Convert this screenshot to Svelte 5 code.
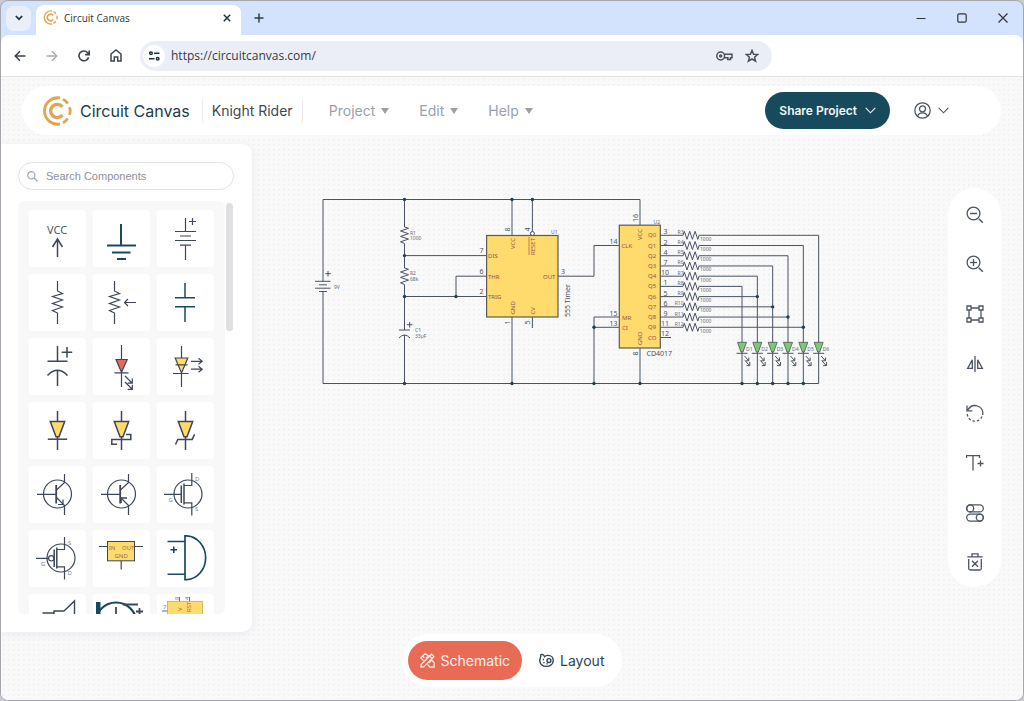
<script lang="ts">
  let search = $state('');
  let url = $state('https://circuitcanvas.com/');
  let projectName = $state('Knight Rider');
  let mode = $state<'schematic' | 'layout'>('schematic');

  const menus = ['Project', 'Edit', 'Help'];

  const parts = [
    'VCC', 'Ground', 'Battery',
    'Resistor', 'Potentiometer', 'Capacitor',
    'Polarized capacitor', 'LED', 'Laser diode',
    'Diode', 'Schottky diode', 'Zener diode',
    'NPN transistor', 'PNP transistor', 'N-channel MOSFET',
    'P-channel MOSFET', 'Voltage regulator', 'AND gate',
    'Speaker', 'Motor', '555 timer'
  ];

  const tools = [
    'Zoom out', 'Zoom in', 'Zoom to fit', 'Flip',
    'Rotate', 'Add text', 'Toggle options', 'Delete'
  ];

  // CD4017 outputs, one row per pin
  const firstRow = 235.3;
  const rowStep = 10.22;
  const ledStep = 15.33;
  const outputs = [
    { pin: '3', led: 5 },
    { pin: '2', led: 4 },
    { pin: '4', led: 3 },
    { pin: '7', led: 2 },
    { pin: '10', led: 1 },
    { pin: '1', led: 0 },
    { pin: '5', led: 1 },
    { pin: '6', led: 2 },
    { pin: '9', led: 3 },
    { pin: '11', led: 4 }
  ].map((o, i) => ({
    ...o,
    name: `Q${i}`,
    resistor: `R${i + 3}`,
    y: firstRow + i * rowStep,
    x: 742 + o.led * ledStep,
    joins: i > 5
  }));

  const leds = [0, 1, 2, 3, 4, 5].map((i) => ({
    x: 742 + i * ledStep,
    top: firstRow + (5 - i) * rowStep
  }));

  const nodes = [
    [404.5, 199.5], [512, 199.5], [532.4, 199.5],
    [404.5, 255.6], [404.5, 296.5], [456, 296.5],
    [404.5, 383.5], [512, 383.5], [594, 383.5], [640, 383.5], [594, 327.3]
  ];

  const labels = [
    { t: 'DIS', x: 488, y: 258 },
    { t: 'THR', x: 488, y: 278.5 },
    { t: 'TRIG', x: 488, y: 299 },
    { t: 'OUT', x: 543, y: 278.5 },
    { t: 'CLK', x: 621.5, y: 248 },
    { t: 'MR', x: 622, y: 319.5 },
    { t: 'CI', x: 622, y: 330 },
    { t: 'CO', x: 648, y: 340 }
  ];

  const turned = [
    { t: 'VCC', x: 514.5, y: 249 },
    { t: 'RESET', x: 534.8, y: 255 },
    { t: 'GND', x: 514.5, y: 314.5 },
    { t: 'CV', x: 534.8, y: 314.5 },
    { t: 'VCC', x: 642.3, y: 240 },
    { t: 'GND', x: 642.3, y: 345 }
  ];

  const pins = [
    { t: '7', x: 479.5, y: 252.5 },
    { t: '6', x: 479.5, y: 273.5 },
    { t: '2', x: 479.5, y: 294 },
    { t: '3', x: 561, y: 274 },
    { t: '14', x: 609.5, y: 243.7 },
    { t: '15', x: 609.5, y: 315.5 },
    { t: '13', x: 609.5, y: 326 },
    { t: '12', x: 661, y: 336.3 }
  ];

  const turnedPins = [
    { t: '8', x: 509.7, y: 231.5 },
    { t: '4', x: 530, y: 231.5 },
    { t: '1', x: 509.7, y: 324.5 },
    { t: '5', x: 530, y: 324.5 },
    { t: '16', x: 638.3, y: 222 },
    { t: '8', x: 638.3, y: 355.5 }
  ];
</script>

{#snippet logo(size: number)}
  <svg width={size} height={size} viewBox="0 0 30 30" fill="none" stroke="#dea653" stroke-width="2.8">
    <path d="M18 2A13.2 13.2 0 1 0 18 28" />
    <path d="M21 3.3A13.2 13.2 0 0 1 25.8 7.5M27.6 11.2A13.2 13.2 0 0 1 27.6 18.8M25.8 22.5A13.2 13.2 0 0 1 21 26.7" />
    <path d="M20.3 10.8A6.6 6.6 0 1 0 20.3 19.2" stroke-width="3.4" />
  </svg>
{/snippet}

{#snippet chevron()}
  <svg width="11" height="7" viewBox="0 0 11 7" fill="none" stroke="currentColor" stroke-width="1.1">
    <path d="M.7 .8L5.5 5.8L10.3 .8" />
  </svg>
{/snippet}

{#snippet partIcon(i: number)}
  <svg class="part-icon" viewBox="0 0 57 57" fill="none" stroke="#3d4757" stroke-width="1.2">
    {#if i === 0}
      <text x="28" y="24" font-size="11" text-anchor="middle">VCC</text>
      <path d="M28.5 47V29.5M23.5 37L28.5 29L33.5 37" stroke-width="1.5" />
    {:else if i === 1}
      <g stroke="#194a5c" stroke-width="2"><path d="M28 14V35M14 35.5H43M19 42.5H37.5M24 49H33" /></g>
    {:else if i === 2}
      <path d="M28.5 8V21.5M18 21.5H39M23 26H34M18 30.5H39M23 35.2H34M28.5 35V50M35.5 8V15M32 11.5H39" />
    {:else if i === 3}
      <path d="M28.5 7V17L33.5 19.5L23.5 22.5L33.5 26L23.5 29.5L33.5 33L23.5 36.5L28.5 39V50" />
    {:else if i === 4}
      <path d="M21.5 7V17L26.5 19.5L16.5 22.5L26.5 26L16.5 29.5L26.5 33L16.5 36.5L21.5 39V50M43 28.5H31.5M35 25L31.5 28.5L35 32" />
    {:else if i === 5}
      <path d="M28 9V23.5M18 23.7H38M18 32.7H38M28 33V48" stroke="#194a5c" stroke-width="1.5" />
    {:else if i === 6}
      <path d="M28.5 8V23.3M18.5 23.3H38.5M18.5 37.5Q28.5 27 38.5 37.5M28.5 32.5V48M38 9V19.5M32.7 14.2H43.2" stroke-width="1.5" />
    {:else if i === 7}
      <path d="M28.5 7V21M28.5 35V49" />
      <path d="M23 21.5H34.2L28.5 34.2Z" fill="#e96a54" />
      <path d="M21.5 34.8H35.5M32 38L39 45M39.3 40.5V45.2H34.6M32 44L39 51M39.3 46.8V51.3H34.6" />
    {:else if i === 8}
      <path d="M24.5 8V20M24.5 35V49" />
      <path d="M18.2 20H30.8L24.5 35Z" fill="#ffdb6e" />
      <path d="M16 35.5H31.5M18.5 26.8H30.5M34 23.3H45M41.5 20.3L45.2 23.3L41.5 26.3M34 31.2H45M41.5 28.2L45.2 31.2L41.5 34.2" />
    {:else if i < 12}
      <path d="M28.5 9V19M28.5 35V48" stroke-width="1.5" />
      <path d="M21.3 19.6H35.7L30 34.8H27Z" fill="#ffdb6e" stroke-width="1.5" />
      {#if i === 9}
        <path d="M18.8 37.2H38.2" stroke-width="1.5" />
      {:else if i === 10}
        <path d="M24 42.3H18.8V37.4H37.8V32.6H33" stroke-width="1.5" />
      {:else}
        <path d="M18.5 42.5L20.8 37.4H35.2L37.6 32.4" stroke-width="1.5" />
      {/if}
    {:else if i < 14}
      <circle cx="28.5" cy="28" r="14" />
      <path d="M8 28.3H27M35.5 8V16.5L27.5 24M27.5 31.5L35.5 39.5V49" />
      <path d="M27.2 19V37.5" stroke-width="1.8" />
      {#if i === 12}
        <path d="M34 33.5V38.5H29" />
      {:else}
        <path d="M28 37V32H34" stroke-width="1.6" />
      {/if}
    {:else if i === 14}
      <circle cx="31" cy="28" r="14" />
      <path d="M7 28.3H24.5M27 19.5H34.8V7M27 36.8H34.8V49.5" />
      <path d="M24.3 19.5V37M27 17.5V38.5" stroke-width="1.5" />
      <g class="tiny"><text x="38" y="15">D</text><text x="11.5" y="35.5">G</text><text x="38" y="45">S</text></g>
    {:else if i === 15}
      <circle cx="32" cy="28" r="14" />
      <circle cx="22.3" cy="28.3" r="2.7" />
      <path d="M7 28.3H19.5M28 19.5H35.5V7M28 36.8H35.5V49.5" />
      <path d="M25.2 19.5V37M27.8 17.5V38.5" stroke-width="1.5" />
      <g class="tiny"><text x="39" y="15">S</text><text x="12" y="35.5">G</text><text x="38.5" y="45">D</text></g>
    {:else if i === 16}
      <path d="M6 16.5H15M41.5 16.5H50M28.2 31V39.5" />
      <rect x="14.5" y="11.5" width="27" height="19.3" fill="#ffdb6e" stroke-width="1" />
      <g class="tiny brown"><text x="15.8" y="20">IN</text><text x="29" y="20">OUT</text><text x="21.5" y="28.3">GND</text></g>
    {:else if i === 17}
      <path d="M28 5.8H30A20 22 0 0 1 30 49.7H28Z" stroke="#194a5c" stroke-width="1.7" />
      <path d="M10.5 11.5H28M10.5 44.3H28M16.8 16.5V23M13.5 19.7H20" stroke="#194a5c" stroke-width="1.6" />
    {:else if i === 18}
      <path d="M13.5 19H25V17H35L45.5 7V40L35 31H25V19" stroke-width="1.4" />
    {:else if i === 19}
      <path d="M3 8H7.5V40H3Z" fill="#194a5c" stroke="none" />
      <circle cx="23" cy="29" r="20.5" stroke="#194a5c" stroke-width="2.2" />
      <path d="M30 10.5H45M23 13V22M46.5 14V21M43 17.5H50" stroke-width="1.8" />
    {:else}
      <path d="M22.5 3V8M32.5 3V8M5 17H11" stroke-width=".8" />
      <rect x="10.5" y="7.3" width="35" height="36" fill="#ffdb6e" stroke="#c9a75c" stroke-width=".8" />
      <g class="tiny brown"><text x="25" y="17" transform="rotate(-90 25 17)">V</text><text x="34" y="18" transform="rotate(-90 34 18)">RST</text></g>
      <g class="tiny"><text x="22" y="6" transform="rotate(-90 22 6)">8</text><text x="32" y="6" transform="rotate(-90 32 6)">4</text><text x="6" y="15">7</text></g>
    {/if}
  </svg>
{/snippet}

{#snippet toolIcon(i: number)}
  <svg width="18" height="18" viewBox="0 0 18 18" fill="none" stroke="#4d5563" stroke-width="1.3">
    {#if i < 2}
      <circle cx="7.5" cy="7.5" r="6.4" />
      <path d="M12.8 12.8L16.8 16.8" stroke-width="1.5" />
      <path d="M4 7.5H11" />
      {#if i === 1}<path d="M7.5 4V11" />{/if}
    {:else if i === 2}
      <path d="M5 3H13M5 15H13M3 5V13M15 5V13" />
      <path d="M1 1H5V5H1ZM13 1H17V5H13ZM1 13H5V17H1ZM13 13H17V17H13Z" />
    {:else if i === 3}
      <path d="M9 1V17M6.3 4.8V13.4H1.6ZM11.7 4.8V13.4H16.4Z" />
    {:else if i === 4}
      <path d="M1 1.5V6.8H6.3M1.4 6.5C4 2 8 .8 11.5 2C15.5 3.5 17.4 7 16.6 11" />
      <path d="M16 12.6A7.7 7.7 0 0 1 1.3 8.6" stroke-dasharray="2.4 2" />
    {:else if i === 5}
      <path d="M.5 4V1.6H13.5V4M7 1.6V16.5M14.5 6.5V12.5M11.5 9.5H17.5" />
    {:else if i === 6}
      <rect x=".7" y=".9" width="16.6" height="7" rx="3.5" />
      <rect x=".7" y="10.1" width="16.6" height="7" rx="3.5" />
      <circle cx="4.2" cy="4.4" r="3.5" />
      <circle cx="13.8" cy="13.6" r="3.5" />
    {:else}
      <path d="M1.3 3.8H16.7M6 3.5V.8H12V3.5M2.7 6V15.5Q2.7 17 4.2 17H13.8Q15.3 17 15.3 15.5V6M6 7.8L12 13.8M12 7.8L6 13.8" />
    {/if}
  </svg>
{/snippet}

<div class="window">
  <div class="tab-strip">
    <button class="tab-list" aria-label="Search tabs">
      <svg width="8" height="6" viewBox="0 0 8 6" fill="none" stroke="#20333f" stroke-width="1.7"><path d="M.8 1L4 4.2L7.2 1" /></svg>
    </button>
    <div class="tab">
      {@render logo(15)}
      <span>Circuit Canvas</span>
      <button aria-label="Close tab">
        <svg width="8" height="8" viewBox="0 0 8 8" stroke="#20333f" stroke-width="1.5"><path d="M.8 .8L7.2 7.2M7.2 .8L.8 7.2" /></svg>
      </button>
    </div>
    <button class="new-tab" aria-label="New tab">
      <svg width="10" height="10" viewBox="0 0 10 10" stroke="#333c44" stroke-width="1.5"><path d="M5 .5V9.5M.5 5H9.5" /></svg>
    </button>
    <div class="window-buttons">
      <button aria-label="Minimize"><svg width="10" height="10" viewBox="0 0 10 10" stroke="#333" ><path d="M.5 5.5H9.5" /></svg></button>
      <button aria-label="Maximize"><svg width="10" height="10" viewBox="0 0 10 10" fill="none" stroke="#333" stroke-width="1.2"><rect x=".8" y=".8" width="8.4" height="8.4" rx="1.5" /></svg></button>
      <button aria-label="Close"><svg width="10" height="10" viewBox="0 0 10 10" stroke="#333" stroke-width="1.2"><path d="M.5 .5L9.5 9.5M9.5 .5L.5 9.5" /></svg></button>
    </div>
  </div>

  <div class="toolbar">
    <button aria-label="Back">
      <svg width="12" height="12" viewBox="0 0 12 12" fill="none" stroke="#3c434b" stroke-width="1.5"><path d="M11.5 6H1.5M6 1.2L1.2 6L6 10.8" /></svg>
    </button>
    <button aria-label="Forward">
      <svg width="12" height="12" viewBox="0 0 12 12" fill="none" stroke="#a9adb2" stroke-width="1.4"><path d="M.5 6H10.5M6 1.2L10.8 6L6 10.8" /></svg>
    </button>
    <button aria-label="Reload">
      <svg width="12" height="12" viewBox="0 0 12 12" fill="none" stroke="#3c434b" stroke-width="1.6"><path d="M10.6 7.2A4.9 4.9 0 1 1 9.6 2.7L11 4.2M11.2 .5V4.6H7.2" /></svg>
    </button>
    <button aria-label="Home">
      <svg width="12" height="13" viewBox="0 0 12 13" fill="none" stroke="#3c434b" stroke-width="1.5"><path d="M1 5L6 1L11 5V12H7.7V8H4.3V12H1Z" /></svg>
    </button>
    <div class="address">
      <button class="site-info" aria-label="Site information">
        <svg width="11" height="10" viewBox="0 0 11 10" fill="none" stroke="#20333f" stroke-width="1.5"><circle cx="2" cy="2.2" r="1.3" /><path d="M5 2.2H10.5M0 7.8H5.5" /><circle cx="8.7" cy="7.8" r="1.3" /></svg>
      </button>
      <input type="text" aria-label="Address" bind:value={url} />
      <button aria-label="Passwords">
        <svg width="17" height="10" viewBox="0 0 17 10" fill="none" stroke="#4a5058" stroke-width="1.5"><circle cx="4.7" cy="5" r="3.9" /><circle cx="4.7" cy="5" r="1" /><path d="M8.4 3.2H16V6.8H14.5V8.5H11.8V6.8H8.4" /></svg>
      </button>
      <button aria-label="Bookmark this page">
        <svg width="14" height="14" viewBox="0 0 14 14" fill="none" stroke="#4a5058" stroke-width="1.5"><path d="M7 1.4L8.6 5.2L12.7 5.5L9.6 8.2L10.6 12.2L7 10L3.4 12.2L4.4 8.2L1.3 5.5L5.4 5.2Z" /></svg>
      </button>
    </div>
  </div>

  <div class="app">
    <header>
      <a class="brand" href="/">{@render logo(30)}<span>Circuit Canvas</span></a>
      <input class="project-name" type="text" aria-label="Project name" bind:value={projectName} />
      <nav>
        {#each menus as menu}
          <button>{menu}<span class="caret"></span></button>
        {/each}
      </nav>
      <button class="share">Share Project {@render chevron()}</button>
      <button class="account" aria-label="Account">
        <svg width="17" height="17" viewBox="0 0 17 17" fill="none" stroke="currentColor" stroke-width="1.3"><circle cx="8.5" cy="8.5" r="7.7" /><circle cx="8.5" cy="6.8" r="3" /><path d="M3.6 14.2C4.2 11.8 6 10.8 8.5 10.8S12.8 11.8 13.4 14.2" /></svg>
        {@render chevron()}
      </button>
    </header>

    <main>
      <aside>
        <label class="search">
          <svg width="11" height="11" viewBox="0 0 11 11" fill="none" stroke="#a3a7b3" stroke-width="1.2"><circle cx="4.3" cy="4.3" r="3.6" /><path d="M7 7L10.5 10.5" /></svg>
          <input type="text" placeholder="Search Components" aria-label="Search Components" bind:value={search} />
        </label>
        <div class="library">
          <div class="parts">
            {#each parts as part, i}
              <button class="part" aria-label={part}>{@render partIcon(i)}</button>
            {/each}
          </div>
          <div class="scrollbar"></div>
        </div>
      </aside>

      <section class="canvas">
        <svg class="schematic" viewBox="252 144 696 487" preserveAspectRatio="xMinYMin meet">
          <!-- wires -->
          <g class="wire">
            <path d="M323 281.5V199.5H640V225M323 292V383.5H818.65" />
            <path d="M404.5 199.5V227M404.5 243.5V268M404.5 284.5V330M404.5 335V383.5" />
            <path d="M404.5 255.6H487M404.5 296.5H487M456 296.5V276.2H487" />
            <path d="M512 199.5V235M532.4 199.5V231.5M512 317V383.5M532.4 317V328" />
            <path d="M558 276.2H594V245.5H619M619 317H594V383.5M594 327.3H619M640 348V383.5" />
            <path d="M660 337.5H671" />
            {#each outputs as o}
              <path d="M660 {o.y}H683l1.3-4l2.7 8l2.7-8l2.7 8l2.7-8l2.7 8l1.3-4H{o.x}" />
            {/each}
            {#each leds as led}
              <path d="M{led.x} {led.top}V383.5" />
            {/each}
          </g>

          <!-- battery, resistors, capacitor -->
          <g class="wire">
            <path d="M315 281.3H330.5M319 284.8H327M315 288.2H330.5M319 291.5H327M328 271V276.5M325.3 273.7H330.8" />
            <path d="M404.5 227l4 1.3l-8 2.7l8 2.7l-8 2.7l8 2.7l-8 2.7l4 1.7M404.5 268l4 1.3l-8 2.7l8 2.7l-8 2.7l8 2.7l-8 2.7l4 1.7" />
            <path d="M399 330H410M399 338Q404.5 332 410 338M409.7 322V327.5M407 324.7H412.5" />
          </g>

          <!-- chips -->
          <rect class="chip" x="486.6" y="235.5" width="71.4" height="81.5" />
          <rect class="chip" x="619.3" y="225.2" width="41" height="122.8" />
          <circle class="inverter" cx="532.4" cy="233.5" r="2" />
          <path d="M529 237V255" stroke="#a4695f" stroke-width=".8" />

          {#each nodes as [x, y]}
            <circle class="node" cx={x} cy={y} r="1.7" />
          {/each}
          {#each outputs.filter((o) => o.joins) as o}
            <circle class="node" cx={o.x} cy={o.y} r="1.7" />
          {/each}

          {#each leds as led, i}
            <g transform="translate({led.x} 342)">
              <path class="led" d="M-4.5 .3H4.5L1 10H-1Z" />
              <path class="arrows" d="M-5.5 11.3H5.5M2.5 14L6.5 18.5M6.8 15.5V18.8H3.6M3 18.5L7.5 23.5M7.8 20V23.6H4.5" />
              <text class="ref" x="4" y="8.5">D{i + 1}</text>
              {#if i < 5}<circle class="node" cx="0" cy="41.5" r="1.7" />{/if}
            </g>
          {/each}

          {#each labels as l}
            <text class="pin-name" x={l.x} y={l.y}>{l.t}</text>
          {/each}
          {#each turned as l}
            <text class="pin-name" transform="translate({l.x} {l.y}) rotate(-90)">{l.t}</text>
          {/each}
          {#each pins as p}
            <text class="pin" x={p.x} y={p.y}>{p.t}</text>
          {/each}
          {#each turnedPins as p}
            <text class="pin" transform="translate({p.x} {p.y}) rotate(-90)">{p.t}</text>
          {/each}
          {#each outputs as o}
            <text class="pin-name" x="648" y={o.y + 2}>{o.name}</text>
            <text class="pin" x={o.pin.length > 1 ? 661 : 663.5} y={o.y - 1}>{o.pin}</text>
            <text class="ref" x="683.5" y={o.y - 1.5} text-anchor="end">{o.resistor}</text>
            <text class="ref" x="700" y={o.y + 5.5}>1000</text>
          {/each}

          <text class="ref" x="334" y="288.5">9V</text>
          <text class="ref" x="410" y="234.5">R1</text>
          <text class="ref" x="410" y="240">1000</text>
          <text class="ref" x="410" y="275">R2</text>
          <text class="ref" x="410" y="280.5">68k</text>
          <text class="ref" x="415" y="332">C1</text>
          <text class="ref" x="415" y="337.5">33µF</text>
          <text class="ref" x="551" y="233.5">U1</text>
          <text class="ref" x="653.5" y="223.5">U2</text>
          <text class="pin" x="646.5" y="355.5">CD4017</text>
          <text class="pin" transform="translate(569.5 317) rotate(-90)">555 Timer</text>
        </svg>
      </section>

      <div class="tools">
        {#each tools as tool, i}
          <button aria-label={tool}>{@render toolIcon(i)}</button>
        {/each}
      </div>
    </main>

    <footer>
      <div class="modes">
        <button class:active={mode === 'schematic'} onclick={() => (mode = 'schematic')}>
          <svg width="15" height="15" viewBox="0 0 16 16" fill="none" stroke="currentColor" stroke-width="1.3">
            <path d="M1.3 12.2L12.2 1.3L14.8 3.9L3.9 14.8L1 15Z" />
            <path d="M6.4 5.6L9 3L5.4 .9L.9 5.2L3.8 8.2M9.6 10.4L12.6 7.6L15.2 10.6L15 15L10.6 15L8 12.2" />
            <path d="M10.2 3.4L12.6 5.8M3.2 3.6L4.6 5" />
          </svg>
          Schematic
        </button>
        <button class:active={mode === 'layout'} onclick={() => (mode = 'layout')}>
          <svg width="15" height="15" viewBox="0 0 16 15" fill="none" stroke="currentColor" stroke-width="1.5">
            <path d="M2 1.2C4 .5 5.2 1.5 6 3.4C7 2.2 8.2 2 9.6 2C12.8 2 15.2 4.2 15.2 7.4C15.2 11 12 13.8 7.8 13.8C3.5 13.8 .8 11 .8 7.5C.8 5 2.3 4 2 1.2Z" />
            <circle cx="10.6" cy="7.6" r="2.1" /><path d="M4 6.5H5.4M4.6 9.8H6M8 11H9.2" />
          </svg>
          Layout
        </button>
      </div>
    </footer>
  </div>
</div>

<style>
  :global(body) {
    margin: 0;
    background: #c9ccd3;
  }

  .window {
    box-sizing: border-box;
    height: 100vh;
    display: flex;
    flex-direction: column;
    border: 1px solid #a6a6ac;
    border-radius: 8px;
    overflow: hidden;
    background: #d3e3fd;
    font-family: Inter, 'Liberation Sans', sans-serif;
  }

  button {
    display: flex;
    align-items: center;
    justify-content: center;
    padding: 0;
    border: 0;
    background: none;
    font: inherit;
    color: inherit;
    cursor: pointer;
  }

  input {
    min-width: 0;
    padding: 0;
    border: 0;
    outline: 0;
    background: none;
    font: inherit;
    color: inherit;
  }

  svg {
    flex: none;
    display: block;
  }

  .tab-strip {
    flex: none;
    display: flex;
    align-items: center;
    height: 34px;
    padding-left: 5px;
  }

  .tab-list {
    width: 25px;
    height: 25px;
    margin-right: 5px;
    border-radius: 8px;
    background: #e9eef9;
  }

  .tab {
    display: flex;
    align-items: center;
    gap: 6px;
    align-self: flex-end;
    box-sizing: border-box;
    width: 205px;
    height: 30px;
    padding: 0 10px 5px 7px;
    border-radius: 8px 8px 0 0;
    background: #fff;
    font-family: 'Open Sans', sans-serif;
    font-size: 10px;
    color: #2a3238;
  }

  .tab span {
    flex: 1;
  }

  .new-tab {
    width: 26px;
    height: 26px;
    margin-left: 5px;
  }

  .window-buttons {
    display: flex;
    margin-left: auto;
  }

  .window-buttons button {
    width: 41px;
    height: 32px;
  }

  .toolbar {
    flex: none;
    display: flex;
    align-items: center;
    height: 41px;
    padding-left: 3px;
    border-bottom: 1px solid #dfe1e4;
    border-radius: 8px 8px 0 0;
    background: #fff;
  }

  .toolbar > button {
    width: 32px;
    height: 32px;
  }

  .address {
    display: flex;
    align-items: center;
    gap: 12px;
    box-sizing: border-box;
    width: 62%;
    height: 30px;
    margin-left: 8px;
    padding: 0 13px 0 3px;
    border-radius: 15px;
    background: #ebeef7;
    font-family: 'Open Sans', sans-serif;
    font-size: 12px;
    color: #343b43;
  }

  .site-info {
    width: 22px;
    height: 22px;
    border-radius: 50%;
    background: #fff;
  }

  .address input {
    flex: 1;
    margin-left: -6px;
  }

  .app {
    flex: 1;
    min-height: 0;
    display: flex;
    flex-direction: column;
    background: radial-gradient(circle, #f1f1f1 1px, transparent 1px) 0 0 / 5px 5px #f9f9f9;
  }

  header {
    flex: none;
    display: flex;
    align-items: center;
    height: 49px;
    margin: 9px 22px 9px 21px;
    padding-left: 20px;
    border-radius: 25px;
    background: #fff;
    font-size: 14px;
    color: #9a9fa9;
  }

  .brand {
    display: flex;
    align-items: center;
    gap: 8px;
    font-size: 16px;
    color: #213d4c;
    text-decoration: none;
  }

  .project-name {
    box-sizing: border-box;
    width: 101px;
    height: 27px;
    margin-left: 12px;
    padding: 0 9px;
    border: 1px solid #ececf0;
    border-width: 0 1px;
    border-radius: 4px;
    color: #3f4854;
  }

  nav {
    display: flex;
    gap: 30px;
    margin-left: 26px;
  }

  nav button {
    gap: 6px;
  }

  .caret {
    border: 4px solid transparent;
    border-top: 6px solid #9c9fa5;
    border-bottom: 0;
  }

  .share {
    gap: 8px;
    height: 37px;
    margin-left: auto;
    padding: 0 14px;
    border-radius: 19px;
    background: #174a5c;
    font-size: 12px;
    font-weight: 600;
    color: #f4f6f7;
  }

  .account {
    gap: 7px;
    margin: 0 52px 0 24px;
    color: #4d5563;
  }

  main {
    flex: 1;
    min-height: 0;
    display: flex;
  }

  aside {
    flex: none;
    display: flex;
    flex-direction: column;
    gap: 11px;
    box-sizing: border-box;
    width: 251px;
    padding: 18px 18px 18px 17px;
    border-radius: 0 10px 10px 0;
    background: #fff;
    box-shadow: 0 2px 8px #e9eaf1;
  }

  .search {
    flex: none;
    display: flex;
    align-items: center;
    gap: 8px;
    box-sizing: border-box;
    height: 28px;
    padding: 0 8px;
    border: 1px solid #e1e3ec;
    border-radius: 14px;
    font-family: 'Liberation Sans', sans-serif;
    font-size: 11px;
    color: #4d5563;
  }

  .search input {
    flex: 1;
  }

  .search input::placeholder {
    color: #8d9099;
  }

  .library {
    flex: 1;
    min-height: 0;
    display: flex;
    gap: 1px;
  }

  .parts {
    display: grid;
    grid-template-columns: repeat(3, 57px);
    grid-auto-rows: 57px;
    gap: 7px;
    padding: 9px 11px 0 11px;
    border-radius: 6px;
    overflow: hidden;
    background: #f8f8f9;
  }

  .part {
    border-radius: 4px;
    background: #fff;
  }

  .part-icon {
    width: 57px;
    height: 57px;
  }

  .part-icon text {
    font-family: 'Noto Sans', sans-serif;
    fill: #4d5563;
    stroke: none;
  }

  .part-icon .tiny text {
    font-size: 6px;
    fill: #7b8290;
  }

  .part-icon .brown text {
    fill: #a4695f;
  }

  .scrollbar {
    width: 7px;
    height: 128px;
    margin-top: 2px;
    border-radius: 4px;
    background: #dfdfe2;
  }

  .canvas {
    flex: 1;
    min-width: 0;
  }

  .schematic {
    width: 100%;
    height: 100%;
  }

  .schematic text {
    font-family: 'Noto Sans', sans-serif;
  }

  .wire {
    fill: none;
    stroke: #4a5263;
    stroke-width: 1;
  }

  .chip {
    fill: #ffdb6e;
    stroke: #5b5a58;
    stroke-width: 1.2;
  }

  .inverter {
    fill: #fff;
    stroke: #3d4757;
    stroke-width: 1;
  }

  .node {
    fill: #1d4152;
  }

  .led {
    fill: #7fc57a;
    stroke: #3f5a4c;
    stroke-width: .8;
  }

  .arrows {
    fill: none;
    stroke: #4a5263;
    stroke-width: 1;
  }

  .pin-name {
    font-size: 6px;
    fill: #96524a;
  }

  .pin {
    font-size: 7px;
    fill: #4a5263;
  }

  .ref {
    font-size: 5px;
    fill: #626978;
  }

  .tools {
    flex: none;
    align-self: flex-start;
    display: flex;
    flex-direction: column;
    justify-content: space-around;
    box-sizing: border-box;
    width: 53px;
    min-height: 399px;
    margin: 44px 22px 0 0;
    padding-top: 2px;
    border-radius: 27px;
    background: #fff;
  }

  .tools button {
    height: 40px;
  }

  footer {
    flex: none;
    display: flex;
    justify-content: center;
    padding: 2px 0 13px;
  }

  .modes {
    display: flex;
    gap: 5px;
    padding: 7px 6px;
    border-radius: 27px;
    background: #fff;
    font-size: 14px;
    color: #2c4452;
  }

  .modes button {
    gap: 6px;
    height: 39px;
    padding: 0 12px;
    border-radius: 20px;
  }

  .modes .active {
    background: #e86b56;
    color: #fdf1ec;
  }
</style>
